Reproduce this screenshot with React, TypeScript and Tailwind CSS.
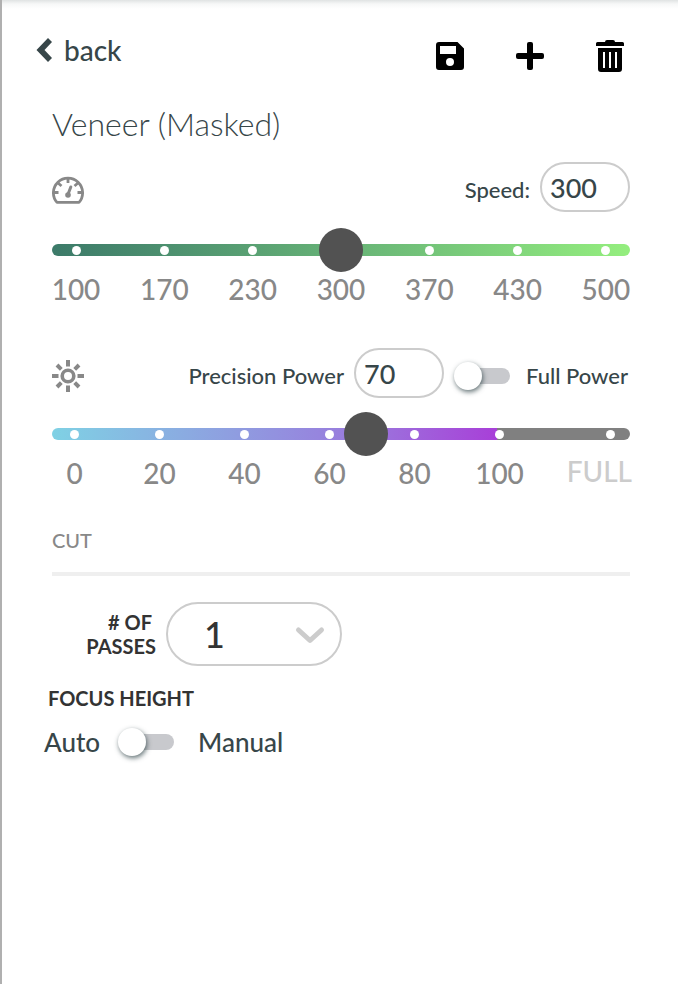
import { useState } from "react"

const speedMarks = [100, 170, 230, 300, 370, 430, 500]
const powerMarks = [0, 20, 40, 60, 80, 100]

const SaveIcon = () => (
  <svg className="h-7 w-7" viewBox="0 0 28 28" fill="currentColor" aria-hidden="true">
    <path
      fillRule="evenodd"
      d="M3 0H21.5L28 6.5V25A3 3 0 0 1 25 28H3A3 3 0 0 1 0 25V3A3 3 0 0 1 3 0ZM4 4V12H20V4ZM14 16A4 4 0 1 0 14 24A4 4 0 1 0 14 16Z"
    />
  </svg>
)

const PlusIcon = () => (
  <svg className="h-7 w-7" viewBox="0 0 28 28" fill="currentColor" aria-hidden="true">
    <rect x="11" width="6" height="28" rx="2" />
    <rect y="11" width="28" height="6" rx="2" />
  </svg>
)

const TrashIcon = () => (
  <svg className="h-8 w-7" viewBox="0 0 28 32" fill="currentColor" aria-hidden="true">
    <path d="M9 2Q9 0 11 0H17Q19 0 19 2H26.5Q28 2 28 3.5V6H0V3.5Q0 2 1.5 2Z" />
    <path
      fillRule="evenodd"
      d="M2 8H26V29A3 3 0 0 1 23 32H5A3 3 0 0 1 2 29ZM7 12V28H9V12ZM13 12V28H15V12ZM19 12V28H21V12Z"
    />
  </svg>
)

const GaugeIcon = () => (
  <svg
    className="mt-1.5 h-7 w-8 text-[#888]"
    viewBox="0 0 32 28"
    fill="none"
    stroke="currentColor"
    strokeWidth="2.8"
    aria-hidden="true"
  >
    <path d="M5 26.4A14.6 14.6 0 1 1 27 26.4Z" strokeLinejoin="round" />
    <path d="M16 2V7M2 16.5H6.5M30 16.5H25.5M6 7L9.5 10M26 7L22.5 10" />
    <path d="M16.3 17.5L18.8 11" strokeWidth="3" strokeLinecap="round" />
    <circle cx="16" cy="19" r="2.8" fill="currentColor" stroke="none" />
  </svg>
)

const SunIcon = () => (
  <svg
    className="mt-1.5 h-8 w-8 text-[#888]"
    viewBox="0 0 32 32"
    fill="none"
    stroke="currentColor"
    strokeWidth="4"
    aria-hidden="true"
  >
    <circle cx="16" cy="16" r="5.8" strokeWidth="3.6" />
    <path d="M16 0V6.5M16 25.5V32M0 16H6.5M25.5 16H32" />
    <path d="M5 5L9.3 9.3M22.7 22.7L27 27M5 27L9.3 22.7M22.7 9.3L27 5" />
  </svg>
)

const Dot = () => <span className="h-[9px] w-[9px] rounded-full bg-white" />

type RangeProps = {
  label: string
  value: number
  min: number
  max: number
  onChange: (value: number) => void
}

const Range = ({ label, value, min, max, onChange }: RangeProps) => (
  <input
    type="range"
    aria-label={label}
    min={min}
    max={max}
    value={value}
    onChange={(e) => onChange(Number(e.target.value))}
    className="absolute inset-0 h-11 w-full cursor-pointer appearance-none bg-transparent [&::-webkit-slider-thumb]:h-11 [&::-webkit-slider-thumb]:w-11 [&::-webkit-slider-thumb]:appearance-none [&::-webkit-slider-thumb]:rounded-full [&::-webkit-slider-thumb]:bg-[#525252]"
  />
)

const Toggle = ({ id, label }: { id: string; label: string }) => {
  const [on, setOn] = useState(false)

  return (
    <span className="flex h-7 w-14 shrink-0 items-center pl-3">
      <input
        id={id}
        type="checkbox"
        role="switch"
        aria-label={label}
        checked={on}
        onChange={() => setOn(!on)}
        className="flex h-4 w-full cursor-pointer appearance-none items-center rounded-full bg-[#c8c9cd] before:-ml-3 before:h-7 before:w-7 before:shrink-0 before:rounded-full before:bg-white before:shadow-[1px_2px_5px_rgba(47,67,71,0.75)] checked:before:ml-4"
      />
    </span>
  )
}

export default function App() {
  const [speed, setSpeed] = useState(300)
  const [power, setPower] = useState(70)
  const [passes, setPasses] = useState("1")

  return (
    <main className="min-h-screen border-l-2 border-[#b0b0b0] bg-[linear-gradient(#e0e3e3,#f7f8f8_4px,#fff_9px)] font-['Lato',sans-serif] font-medium text-[#374649]">
      <header className="flex items-start justify-between pt-8 pr-[54px] pl-[34px]">
        <button type="button" className="flex h-9 cursor-pointer items-center gap-3 text-[28px]">
          <svg className="h-6 w-4" viewBox="0 0 16 24" fill="currentColor" aria-hidden="true">
            <path d="M12 0L16 4L8.5 12L16 20L12 24L0.5 12Z" />
          </svg>
          back
        </button>
        <div className="flex h-12 items-center gap-[52px] text-black">
          <button type="button" aria-label="Save" className="cursor-pointer">
            <SaveIcon />
          </button>
          <button type="button" aria-label="Add" className="cursor-pointer">
            <PlusIcon />
          </button>
          <button type="button" aria-label="Delete" className="cursor-pointer">
            <TrashIcon />
          </button>
        </div>
      </header>

      <div className="pr-12 pl-[50px]">
        <h1 className="mt-6 text-[32px] leading-10 font-light">Veneer (Masked)</h1>

        <section className="mt-[18px]">
          <div className="flex items-center">
            <GaugeIcon />
            <label htmlFor="speed" className="mt-1 ml-auto text-[22px]">
              Speed:
            </label>
            <input
              id="speed"
              type="text"
              inputMode="numeric"
              value={speed}
              onChange={(e) => setSpeed(Number(e.target.value) || 0)}
              className="ml-2.5 h-[50px] w-[90px] rounded-full border-2 border-[#ccc] bg-white px-2 text-[27px]"
            />
          </div>
          <div className="relative mt-4 flex h-11 items-center">
            <div className="flex h-3 w-full items-center justify-between rounded-full bg-linear-to-r from-[#3c7a69] to-[#94ee7e]">
              {speedMarks.map((mark) => (
                <span key={mark} className="flex w-12 justify-center">
                  <Dot />
                </span>
              ))}
            </div>
            <Range label="Speed" value={speed} min={100} max={500} onChange={setSpeed} />
          </div>
          <div className="flex justify-between text-[28px] leading-[34px] text-[#888]">
            {speedMarks.map((mark) => (
              <span key={mark} className="flex w-12 justify-center">
                {mark}
              </span>
            ))}
          </div>
        </section>

        <section className="mt-[42px]">
          <div className="flex items-center">
            <SunIcon />
            <label htmlFor="power" className="mt-1 ml-auto text-[22px]">
              Precision Power
            </label>
            <input
              id="power"
              type="text"
              inputMode="numeric"
              value={power}
              onChange={(e) => setPower(Number(e.target.value) || 0)}
              className="mr-2.5 ml-2.5 h-[50px] w-[90px] rounded-full border-2 border-[#ccc] bg-white px-2 text-[27px]"
            />
            <span className="mt-1.5">
              <Toggle id="full-power" label="Full Power" />
            </span>
            <label htmlFor="full-power" className="mt-1 ml-4 min-w-[104px] text-[22px]">
              Full Power
            </label>
          </div>
          <div className="relative mt-3.5 flex h-11 items-center">
            <div className="flex h-3 w-full items-center rounded-full bg-[linear-gradient(to_right,#7fd1e4,#9a78dd_54%,#a83fd8_77%,#808080_77%)]">
              <div className="mr-17 flex flex-1 justify-between">
                {powerMarks.map((mark) => (
                  <span key={mark} className="flex w-[45px] justify-center">
                    <Dot />
                  </span>
                ))}
              </div>
              <span className="flex w-10 justify-center">
                <Dot />
              </span>
            </div>
            <Range label="Power" value={power} min={0} max={128} onChange={setPower} />
          </div>
          <div className="flex text-[28px] leading-[34px] text-[#888]">
            <div className="mr-17 flex flex-1 justify-between">
              {powerMarks.map((mark) => (
                <span key={mark} className="flex w-[45px] justify-center">
                  {mark}
                </span>
              ))}
            </div>
            <span className="-mr-0.5 flex w-[42px] justify-end leading-[30px] text-[#ccc]">FULL</span>
          </div>
        </section>

        <h2 className="mt-[38px] border-b-4 border-[#efefef] pb-5 text-[20px] leading-6 text-[#888]">CUT</h2>
      </div>

      <div className="mt-[26px] flex items-center pl-[82px] text-[#333]">
        <label htmlFor="passes" className="w-[72px] text-right text-[20px] leading-6 font-bold">
          <span className="pr-1"># OF</span> PASSES
        </label>
        <div className="relative ml-2.5">
          <select
            id="passes"
            value={passes}
            onChange={(e) => setPasses(e.target.value)}
            className="h-16 w-44 cursor-pointer appearance-none rounded-full border-2 border-[#ccc] bg-white pl-9 text-[36px]"
          >
            <option>1</option>
            <option>2</option>
            <option>3</option>
            <option>4</option>
          </select>
          <svg
            className="pointer-events-none absolute top-6 right-4 h-5 w-8 text-[#ccc]"
            viewBox="0 0 32 20"
            fill="none"
            stroke="currentColor"
            strokeWidth="5"
            strokeLinecap="round"
            strokeLinejoin="round"
            aria-hidden="true"
          >
            <path d="M4.500 4L16 14.500L27.500 4" />
          </svg>
        </div>
      </div>

      <section className="mt-[18px] pl-[42px]">
        <h2 className="pl-1 text-[20px] leading-7 font-bold text-[#333]">FOCUS HEIGHT</h2>
        <div className="mt-3 flex items-center text-[26px] leading-9">
          <label htmlFor="focus-height">Auto</label>
          <span className="mr-6 ml-[18px]">
            <Toggle id="focus-height" label="Manual focus height" />
          </span>
          <label htmlFor="focus-height">Manual</label>
        </div>
      </section>
    </main>
  )
}
